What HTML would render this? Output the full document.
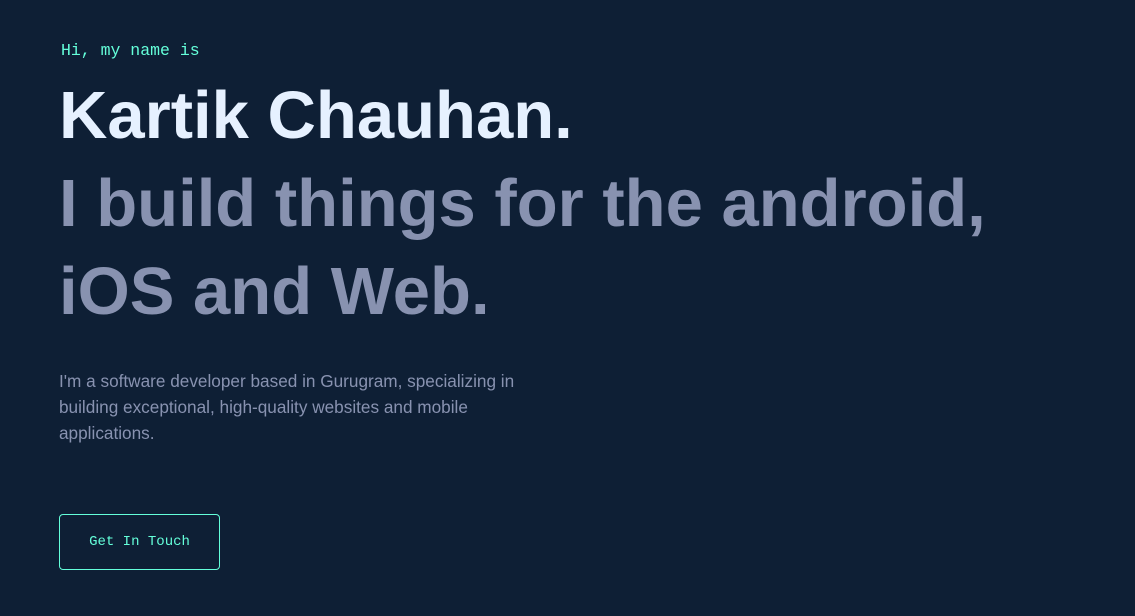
<!DOCTYPE html>
<html><head><meta charset="utf-8"><style>
html,body{margin:0;padding:0;width:1135px;height:616px;overflow:hidden;background:#0e1f35;}
body{position:relative;font-family:"Liberation Sans",sans-serif;}
.hi{position:absolute;left:61px;top:40px;color:#64ffda;font-family:"Liberation Mono",monospace;font-size:16.5px;line-height:22px;}
.h{position:absolute;left:59px;font-weight:bold;font-size:67px;letter-spacing:0;line-height:88px;white-space:nowrap;}
.n{top:72px;color:#e6f1ff;}
.s{top:160px;color:#8892b0;}
p{position:absolute;left:59px;top:368px;margin:0;width:480px;color:#8892b0;font-size:17.2px;line-height:26px;}
.b{position:absolute;left:59px;top:514px;width:159px;height:54px;border:1px solid #64ffda;border-radius:4px;color:#64ffda;font-family:"Liberation Mono",monospace;font-size:14px;line-height:54px;text-align:center;}
</style></head><body>
<div class="hi">Hi, my name is</div>
<div class="h n">Kartik Chauhan.</div>
<div class="h s">I build things for the android,<br>iOS and Web.</div>
<p>I'm a software developer based in Gurugram, specializing in building exceptional, high-quality websites and mobile applications.</p>
<div class="b">Get In Touch</div>
</body></html>
